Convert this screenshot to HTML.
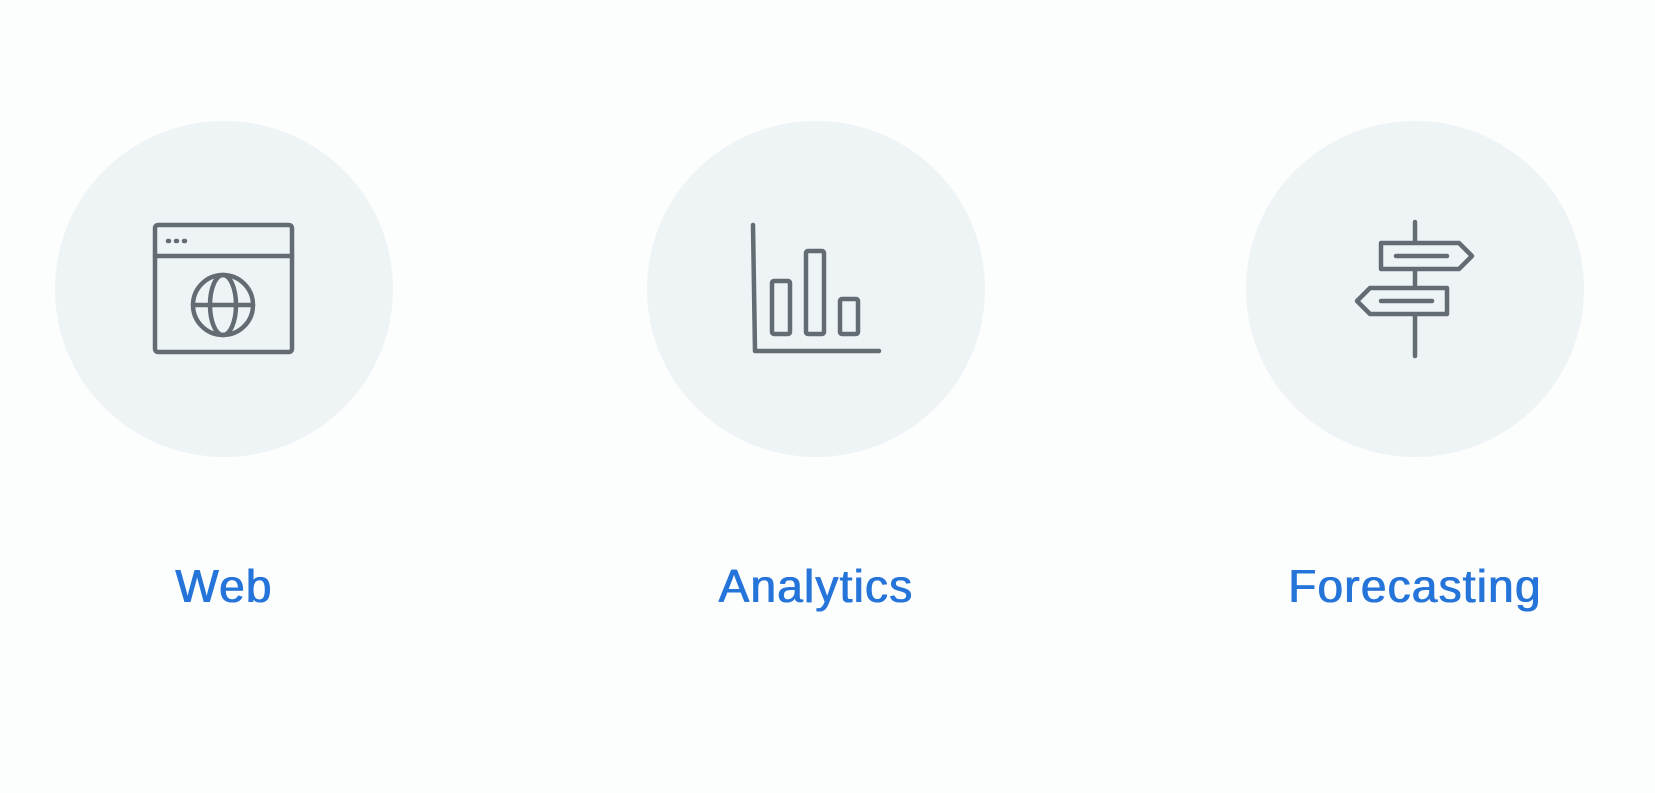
<!DOCTYPE html>
<html><head><meta charset="utf-8"><style>
html,body{margin:0;padding:0;background:#fcfdfd;width:1655px;height:793px;overflow:hidden;font-family:"Liberation Sans",sans-serif}
.c{position:absolute;top:121px;width:338px;height:336px;border-radius:50%;background:#eef3f6}
.t{position:absolute;top:559px;width:400px;text-align:center;color:#2574d9;font-size:46px;letter-spacing:1.2px;text-shadow:0.5px 0 0 #2574d9,-0.5px 0 0 #2574d9}
svg{position:absolute;left:0;top:0}
</style></head><body>
<div class="c" style="left:55px"></div>
<div class="c" style="left:647px"></div>
<div class="c" style="left:1246px"></div>
<svg width="1655" height="793" fill="none" stroke="#636c73" stroke-width="4.5" stroke-linecap="round" stroke-linejoin="round">
<rect x="155" y="225" width="137" height="127" rx="3"/>
<line x1="155" y1="256" x2="292" y2="256"/>
<line x1="168" y1="241" x2="169" y2="241"/><line x1="176" y1="241" x2="177" y2="241"/><line x1="184" y1="241" x2="185" y2="241"/>
<circle cx="223" cy="305" r="30"/>
<ellipse cx="223" cy="305" rx="13" ry="30"/>
<line x1="193" y1="305" x2="253" y2="305"/>
<path d="M753 225 L755 351 L879 351"/>
<rect x="772" y="281" width="18" height="53" rx="2"/>
<rect x="806" y="251" width="18" height="83" rx="2"/>
<rect x="840" y="299" width="18" height="35" rx="2"/>
<line x1="1415" y1="222" x2="1415" y2="242"/>
<line x1="1415" y1="270" x2="1415" y2="287"/>
<line x1="1415" y1="315" x2="1415" y2="356"/>
<path d="M1381 243 L1459 243 L1472 256 L1459 269 L1381 269 Z"/>
<path d="M1447 288 L1370 288 L1357 301 L1370 314 L1447 314 Z"/>
<line x1="1396" y1="256" x2="1447" y2="256"/>
<line x1="1381" y1="301" x2="1432" y2="301"/>
</svg>
<div class="t" style="left:24px">Web</div>
<div class="t" style="left:616px">Analytics</div>
<div class="t" style="left:1215px">Forecasting</div>
</body></html>
